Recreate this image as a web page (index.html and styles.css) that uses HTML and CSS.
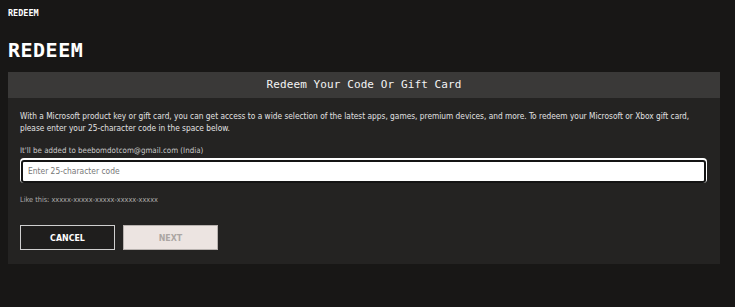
FILE: index.html
```html
<!DOCTYPE html>
<html lang="en">
<head>
<meta charset="utf-8">
<title>Redeem</title>
<link rel="stylesheet" href="styles.css">
</head>
<body>
<div class="crumb">REDEEM</div>
<h1 class="page-title">REDEEM</h1>
<section class="panel">
  <div class="panel-head">Redeem Your Code Or Gift Card</div>
  <div class="panel-body">
    <p class="intro">With a Microsoft product key or gift card, you can get access to a wide selection of the latest apps, games, premium devices, and more. To redeem your Microsoft or Xbox gift card, please enter your 25-character code in the space below.</p>
    <p class="account">It'll be added to beebomdotcom@gmail.com (India)</p>
    <div class="field"><input class="code-input" type="text" placeholder="Enter 25-character code"></div>
    <p class="hint">Like this: xxxxx-xxxxx-xxxxx-xxxxx-xxxxx</p>
    <div class="actions">
      <button class="btn btn-cancel">CANCEL</button>
      <button class="btn btn-next">NEXT</button>
    </div>
  </div>
</section>
</body>
</html>
```
FILE: styles.css
```css
html, body {
  margin: 0;
  padding: 0;
  background: #181716;
  width: 735px;
  height: 307px;
  overflow: hidden;
}
body {
  font-family: "DejaVu Sans Condensed", "DejaVu Sans", sans-serif;
  font-stretch: condensed;
  color: #ddd;
}
.crumb {
  padding: 8px 8px 0;
  height: 10px;
  line-height: 10px;
  font-family: "DejaVu Sans Mono", monospace;
  font-stretch: normal;
  font-weight: bold;
  font-size: 8.5px;
  color: #fff;
}
.page-title {
  margin: 22px 0 0 8px;
  height: 20px;
  line-height: 20px;
  font-family: "DejaVu Sans Mono", monospace;
  font-stretch: normal;
  font-weight: bold;
  font-size: 20px;
  letter-spacing: 0.5px;
  color: #fff;
}
.panel {
  margin: 12px 0 0 8px;
  width: 712px;
  background: #242322;
}
.panel-head {
  height: 26px;
  line-height: 26px;
  background: #3a3938;
  text-align: center;
  font-family: "DejaVu Sans Mono", monospace;
  font-stretch: normal;
  font-size: 11px;
  letter-spacing: 0.1px;
  color: #f4f4f4;
}
.panel-body {
  padding: 12px 13px 14px 12px;
}
.intro {
  margin: 0;
  font-size: 8.28px;
  line-height: 12px;
  color: #e2e2e2;
}
.account {
  margin: 11px 0 1px;
  font-size: 7.9px;
  line-height: 12px;
  color: #c8c8c8;
}
.field {
  background: #fff;
  padding: 1px;
  border-radius: 4px;
  height: 23px;
}
.code-input {
  box-sizing: border-box;
  width: 100%;
  height: 23px;
  margin: 0;
  border: 2px solid #141414;
  border-radius: 3px;
  background: #fff;
  padding: 0 0 0 5px;
  font-family: "DejaVu Sans Condensed", "DejaVu Sans", sans-serif;
  font-stretch: condensed;
  font-size: 8.4px;
  color: #333;
  outline: none;
}
.code-input::placeholder {
  color: #777;
}
.hint {
  margin: 11px 0 0;
  font-size: 7.3px;
  line-height: 12px;
  color: #adadad;
}
.actions {
  display: flex;
  gap: 8px;
  margin-top: 19px;
}
.btn {
  box-sizing: border-box;
  width: 95px;
  height: 25px;
  padding: 0;
  font-family: "DejaVu Sans Condensed", "DejaVu Sans", sans-serif;
  font-stretch: condensed;
  font-weight: bold;
  font-size: 8.8px;
  cursor: pointer;
}
.btn-cancel {
  background: #1f1e1d;
  border: 1px solid #cfcfcf;
  color: #fff;
}
.btn-next {
  background: #ece4e1;
  border: 1px solid #b8b2af;
  color: #aba6a3;
}
```
